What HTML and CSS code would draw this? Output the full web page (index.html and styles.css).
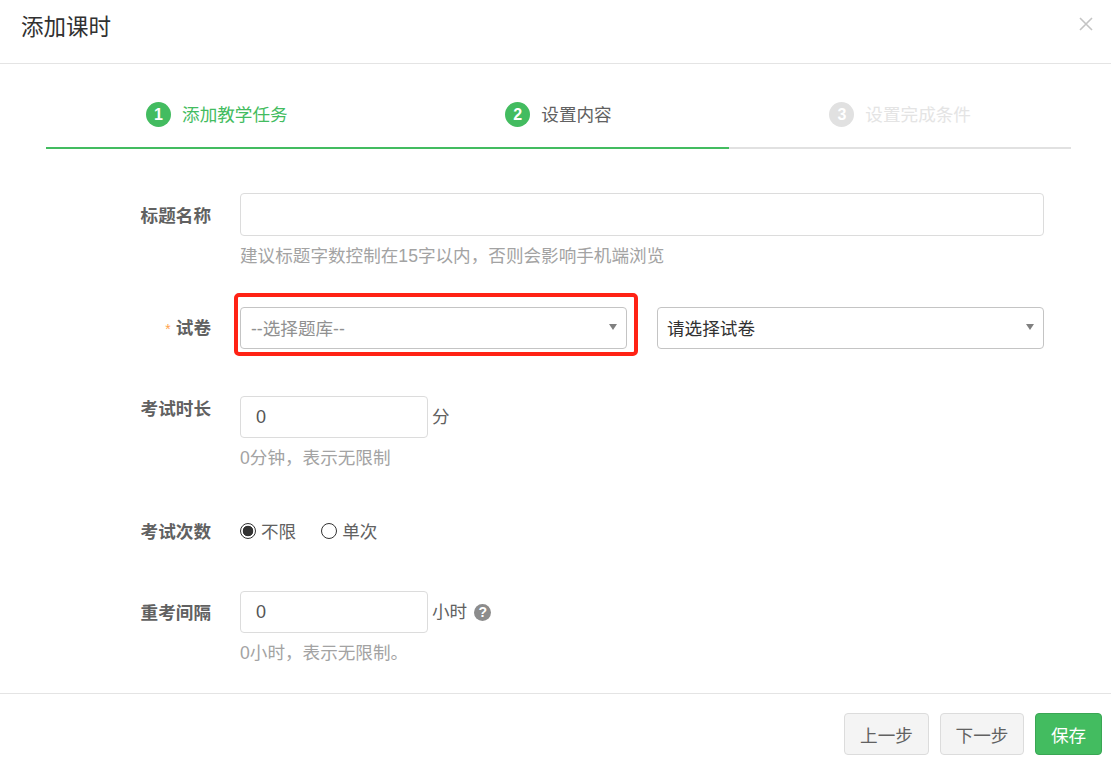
FILE: index.html
```html
<!DOCTYPE html>
<html lang="zh">
<head>
<meta charset="utf-8">
<title>添加课时</title>
<link rel="stylesheet" href="styles.css">
</head>
<body>
<div class="modal">
  <header class="modal-header">
    <h4 class="modal-title">添加课时</h4>
    <svg class="close" width="14" height="14" viewBox="0 0 14 14"><path d="M1 1L13 13M13 1L1 13" stroke="#c4c4c4" stroke-width="1.6" fill="none"/></svg>
  </header>
  <main class="modal-body">
    <ul class="steps">
      <li class="step done"><span class="num">1</span><span class="step-text">添加教学任务</span></li>
      <li class="step active"><span class="num">2</span><span class="step-text">设置内容</span></li>
      <li class="step todo"><span class="num">3</span><span class="step-text">设置完成条件</span></li>
    </ul>
    <form class="form">
      <div class="row row-title">
        <label class="label">标题名称</label>
        <div class="field">
          <div class="input wide"></div>
          <p class="help">建议标题字数控制在15字以内，否则会影响手机端浏览</p>
        </div>
      </div>
      <div class="row row-paper">
        <label class="label"><span class="req">*</span>试卷</label>
        <div class="field selects">
          <div class="select-wrap">
            <div class="select placeholder">--选择题库--<span class="caret"></span></div>
            <div class="highlight"></div>
          </div>
          <div class="select-wrap">
            <div class="select">请选择试卷<span class="caret"></span></div>
          </div>
        </div>
      </div>
      <div class="row row-time">
        <label class="label">考试时长</label>
        <div class="field">
          <div class="inline"><div class="input short">0</div><span class="unit">分</span></div>
          <p class="help">0分钟，表示无限制</p>
        </div>
      </div>
      <div class="row row-count">
        <label class="label">考试次数</label>
        <div class="field radios">
          <span class="radio checked"></span><span class="radio-text first">不限</span>
          <span class="radio"></span><span class="radio-text">单次</span>
        </div>
      </div>
      <div class="row row-gap">
        <label class="label">重考间隔</label>
        <div class="field">
          <div class="inline"><div class="input short">0</div><span class="unit">小时</span><span class="hint">?</span></div>
          <p class="help">0小时，表示无限制。</p>
        </div>
      </div>
    </form>
  </main>
  <footer class="modal-footer">
    <button type="button" class="btn btn-prev">上一步</button>
    <button type="button" class="btn btn-next">下一步</button>
    <button type="button" class="btn btn-save">保存</button>
  </footer>
</div>
</body>
</html>
```
FILE: styles.css
```css
* { box-sizing: border-box; }
html, body { margin: 0; padding: 0; height: 100%; overflow: hidden; background: #fff; }
body {
  font-family: "Liberation Sans", "Noto Sans CJK SC", sans-serif;
  font-size: 16px;
  color: #616161;
}
.modal { display: flex; flex-direction: column; height: 762px; }
.modal-header {
  height: 64px;
  flex: none;
  border-bottom: 1px solid #e4e4e4;
  display: flex;
  align-items: flex-start;
  justify-content: space-between;
  padding: 14px 18px 0 21px;
}
.modal-title { margin: 0; font-size: 22.5px; font-weight: 400; line-height: 28px; color: #313131; }
.close { margin-top: 3px; }
.modal-body { flex: 1; padding: 0 40px 0 46px; min-height: 0; }
.steps {
  list-style: none;
  margin: 0;
  padding: 0;
  display: grid;
  grid-template-columns: repeat(3, 1fr);
  height: 85px;
}
.step {
  display: flex;
  align-items: center;
  justify-content: center;
  gap: 11px;
  height: 85px;
  padding-top: 18px;
  border-bottom: 2px solid #e1e1e1;
}
.step.done, .step.active { border-bottom-color: #43bc60; }
.step.done .step-text { color: #43bc60; }
.step.active .step-text { color: #616161; }
.step.todo .step-text { color: #e4e4e4; }
.step-text { font-size: 17.6px; line-height: 24px; }
.num {
  width: 25px;
  height: 25px;
  border-radius: 50%;
  background: #43bc60;
  color: #fff;
  font-size: 16px;
  font-weight: 700;
  line-height: 25px;
  text-align: center;
}
.step.todo .num { background: #e1e1e1; }
.form { padding-right: 27px; }
.row { display: flex; align-items: flex-start; }
.label {
  width: 165px;
  flex: none;
  text-align: right;
  font-size: 17.6px;
  font-weight: 700;
  color: #616161;
  line-height: 22px;
}
.field { margin-left: 29px; flex: 1; min-width: 0; }
.row-title { margin-top: 44px; }
.row-title .label { padding-top: 12px; }
.row-paper { margin-top: 39px; }
.row-paper .label { padding-top: 10px; }
.row-time { margin-top: 47px; }
.row-time .label { padding-top: 2px; }
.row-count { margin-top: 51px; }
.row-gap { margin-top: 48px; }
.row-gap .label { padding-top: 11px; }
.input {
  height: 43px;
  border: 1px solid #dcdcdc;
  border-radius: 4px;
  background: #fff;
  line-height: 41px;
  font-size: 18px;
  color: #555;
  padding-left: 15px;
}
.input.short { width: 188px; height: 42px; line-height: 40px; }
.help { margin: 8px 0 0; font-size: 17.6px; line-height: 24px; color: #a3a3a3; }
.selects { display: flex; gap: 30px; }
.select-wrap { position: relative; flex: 1; }
.select {
  position: relative;
  height: 42px;
  border: 1px solid #c4c4c4;
  border-radius: 4px;
  background: #fff;
  padding-left: 10px;
  line-height: 42px;
  font-size: 17.6px;
  color: #313131;
}
.select-wrap + .select-wrap .select { padding-left: 9px; }
.select.placeholder { color: #919191; }
.caret {
  position: absolute;
  right: 9px;
  top: 16px;
  width: 0;
  height: 0;
  border-left: 4px solid transparent;
  border-right: 4px solid transparent;
  border-top: 6px solid #808080;
}
.highlight {
  position: absolute;
  left: -6px;
  right: -11px;
  top: -14px;
  bottom: -7px;
  border: 4px solid #ff2215;
  border-radius: 5px;
  pointer-events: none;
}
.req { color: #ffa24d; font-size: 14px; font-weight: 400; margin-right: 5px; }
.inline { display: flex; align-items: center; }
.unit { margin-left: 4px; font-size: 17.6px; color: #616161; line-height: 24px; }
.hint {
  width: 17px;
  height: 17px;
  margin-left: 7px;
  border-radius: 50%;
  background: #8c8c8c;
  color: #fff;
  font-size: 14px;
  font-weight: 700;
  line-height: 17px;
  text-align: center;
}
.radios { display: flex; align-items: center; height: 22px; }
.radio {
  width: 16px;
  height: 16px;
  border: 1px solid #333;
  border-radius: 50%;
  background: #fff;
  flex: none;
  position: relative;
  top: -1px;
}
.radio.checked { background: radial-gradient(circle, #333 0 5px, #fff 5.6px); }
.radio-text { margin-left: 5px; font-size: 17.6px; color: #616161; line-height: 22px; }
.radio-text.first { margin-right: 25px; }
.modal-footer {
  height: 69px;
  flex: none;
  border-top: 1px solid #e4e4e4;
  display: flex;
  justify-content: flex-end;
  align-items: flex-start;
  gap: 11px;
  padding: 19px 9px 0 0;
}
.btn {
  height: 42px;
  border: 1px solid #dcdcdc;
  border-radius: 4px;
  background: #f4f4f4;
  color: #616161;
  font-family: inherit;
  font-size: 17.6px;
  padding: 0;
}
.btn-prev { width: 85px; }
.btn-next { width: 84px; }
.btn-save { width: 67px; background: #43bc60; border-color: #3aa654; color: #fff; }
```
